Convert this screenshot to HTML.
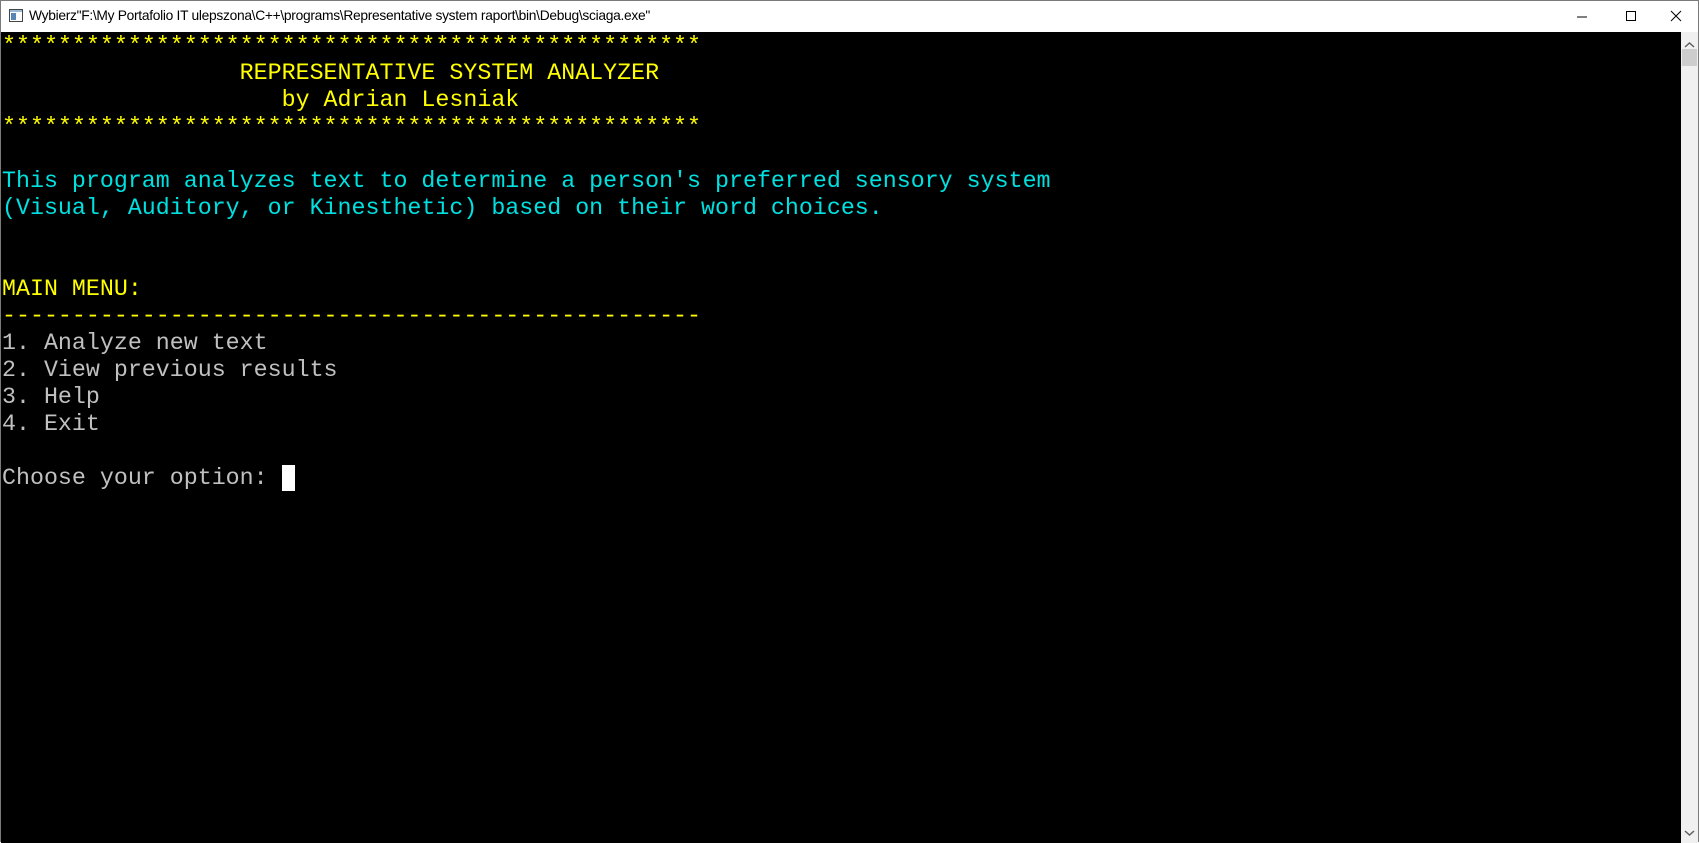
<!DOCTYPE html>
<html><head><meta charset="utf-8"><style>
*{margin:0;padding:0;box-sizing:border-box}
html,body{width:1699px;height:842px;overflow:hidden;background:#fff}
.win{position:absolute;left:0;top:0;width:1699px;height:842px;border:1px solid #7a7a7a;border-bottom:none}
.tb{position:absolute;left:0;top:0;width:1697px;height:31px;background:#fff;font:13.8px "Liberation Sans",sans-serif;color:#000}
.tb .t{position:absolute;left:28px;top:7px;letter-spacing:-0.3px}
.term{position:absolute;left:0;top:31px;width:1680px;height:811px;background:#000}
pre{position:absolute;left:1px;top:1px;font:23.3px/27px "Liberation Mono",monospace;color:#c0c0c0}
.y{color:#ffff00}.c{color:#00e0e0}
.sb{position:absolute;left:1680px;top:31px;width:17px;height:811px;background:#f0f0f0}
</style></head><body>
<div class="win">
<div class="tb">
<svg style="position:absolute;left:8px;top:8px" width="14" height="13"><rect x="0.5" y="0.5" width="13" height="12" fill="#fff" stroke="#444"/><rect x="1" y="1" width="12" height="2" fill="#9bbcd8"/><rect x="2" y="4" width="5" height="7" fill="#5a86b5"/></svg>
<span class="t">Wybierz"F:\My Portafolio IT ulepszona\C++\programs\Representative system raport\bin\Debug\sciaga.exe"</span>
<svg style="position:absolute;left:1575px;top:10px" width="12" height="12"><line x1="1" y1="6" x2="11" y2="6" stroke="#000"/></svg>
<svg style="position:absolute;left:1624px;top:9px" width="12" height="12"><rect x="1.5" y="1.5" width="9" height="9" fill="none" stroke="#000"/></svg>
<svg style="position:absolute;left:1669px;top:9px" width="12" height="12"><path d="M1 1L11 11M11 1L1 11" stroke="#000"/></svg>
</div>
<div class="term"><pre><span class="y">**************************************************
                 REPRESENTATIVE SYSTEM ANALYZER
                    by Adrian Lesniak
**************************************************</span>

<span class="c">This program analyzes text to determine a person's preferred sensory system
(Visual, Auditory, or Kinesthetic) based on their word choices.</span>


<span class="y">MAIN MENU:
--------------------------------------------------</span>
1. Analyze new text
2. View previous results
3. Help
4. Exit

Choose your option: </pre>
<div style="position:absolute;left:281px;top:433px;width:13px;height:26px;background:#fff"></div>
</div>
<div class="sb">
<svg style="position:absolute;left:3px;top:9px" width="11" height="8"><path d="M1 6L5.5 2L10 6" fill="none" stroke="#606060" stroke-width="1.5"/></svg>
<div style="position:absolute;left:1px;top:17px;width:15px;height:17px;background:#cdcdcd"></div>
<svg style="position:absolute;left:3px;top:797px" width="11" height="8"><path d="M1 2L5.5 6L10 2" fill="none" stroke="#606060" stroke-width="1.5"/></svg>
</div>
</div>
</body></html>
